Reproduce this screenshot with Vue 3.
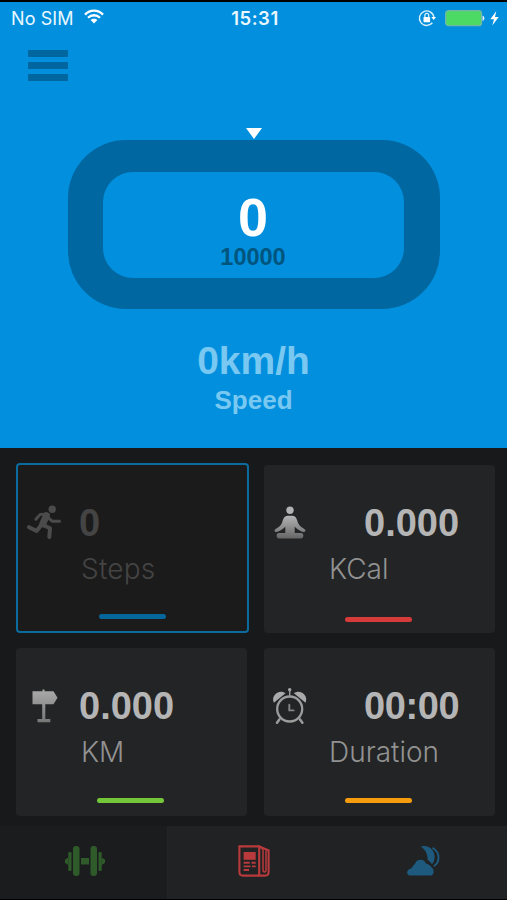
<script setup>
const cards = [
  { id: 'steps', value: '0', label: 'Steps', active: true },
  { id: 'kcal', value: '0.000', label: 'KCal' },
  { id: 'km', value: '0.000', label: 'KM' },
  { id: 'duration', value: '00:00', label: 'Duration' },
]
</script>

<template>
  <main class="screen">
    <section class="hero">
      <header class="status">
        <div class="carrier">
          <span>No SIM</span>
          <svg width="20" height="16" viewBox="0 0 20 16" fill="none" stroke="#fff" stroke-width="2.3">
            <path d="M1 5.6C6 .2 14 .2 19 5.6M4 8.8C7.4 5.4 12.6 5.4 16 8.8" />
            <path d="M6.6 11.1C8.5 9.2 11.5 9.2 13.4 11.1L10 14.6Z" fill="#fff" stroke="none" />
          </svg>
        </div>
        <time>15:31</time>
        <div class="power">
          <svg class="lock" width="19" height="18" viewBox="0 0 19 18" fill="none" stroke="#d9f0fb">
            <path d="M14.4 13.8A7.3 7.3 0 1 1 15.9 8" stroke-width="1.4" />
            <path d="M13.3 8H18L15.7 10.9Z" fill="#fff" stroke="none" />
            <rect x="5.5" y="8" width="6.6" height="5.2" rx=".6" fill="#fff" stroke="none" />
            <path d="M6.9 8.5V6.3a1.9 1.9 0 0 1 3.8 0v2.2" stroke-width="1.3" />
          </svg>
          <svg class="battery" width="40" height="17" viewBox="0 0 40 17">
            <rect x=".7" y=".7" width="35.8" height="15" rx="2.8" fill="#4cd964" stroke="#6fb9a6" stroke-width="1.3" />
            <path d="M37.5 5.5Q39.4 6 39.4 8.2T37.5 11Z" fill="#d9f0fb" />
          </svg>
          <svg class="bolt" width="9" height="15" viewBox="0 0 9 15"><path d="M6.3 0 .3 8.2H4L2.3 14.5 8.7 5.9H5Z" fill="#fff" /></svg>
        </div>
      </header>
      <button class="menu" aria-label="Menu"><i /><i /><i /></button>
      <svg class="marker" width="16" height="11" viewBox="0 0 16 11"><path d="M0 0H16L8 11Z" fill="#fff" /></svg>
      <div class="track">
        <div class="inner">
          <strong>0</strong>
          <span>10000</span>
        </div>
      </div>
      <div class="speed">0km/h</div>
      <div class="speed-label">Speed</div>
    </section>

    <section class="cards">
      <article v-for="card in cards" :key="card.id" class="card" :class="[card.id, { active: card.active }]">
        <div class="icon">
          <svg v-if="card.id === 'steps'" width="35" height="34" viewBox="0 0 35 34" fill="none" stroke="#4b4b4b" stroke-linecap="round" stroke-linejoin="round">
            <circle cx="25.2" cy="4.2" r="3.7" fill="#4b4b4b" stroke="none" />
            <path d="M20 9.2 13.2 9.4 8.9 14.3" stroke-width="2.9" />
            <path d="M19.5 10.5 15.7 19" stroke-width="6.8" />
            <path d="M20.5 12 25.4 16.3H32.5" stroke-width="3" />
            <path d="M14.3 20 9.6 26 2 22.2M16 20 23 23.3 22.3 32" stroke-width="4" />
          </svg>
          <svg v-else-if="card.id === 'kcal'" width="32" height="33" viewBox="0 0 32 33">
            <defs><linearGradient id="sitShade" x2="0" y2="1"><stop stop-color="#b4b4b4" /><stop offset="1" stop-color="#666" /></linearGradient></defs>
            <circle cx="16" cy="4.2" r="3.7" fill="#b2b2b2" />
            <path d="M13.7 9.8H18.3C22.4 10 23 14 24 17C25.3 20 28.3 21.8 30.7 23.2C32.3 24.3 31 26.6 29 26C25.8 25 22.6 22.7 20.7 20.8V27H27C30.2 27 30.2 32.4 27 32.4H5C1.8 32.4 1.8 27 5 27H11.3V20.8C9.4 22.7 6.2 25 3 26C1 26.6-.3 24.3 1.3 23.2C3.7 21.8 6.7 20 8 17C9 14 9.6 10 13.7 9.8Z" fill="url(#sitShade)" />
          </svg>
          <svg v-else-if="card.id === 'km'" width="27" height="34" viewBox="0 0 27 34">
            <defs><linearGradient id="signShade" x2="0" y2="1"><stop stop-color="#aaa" /><stop offset="1" stop-color="#777" /></linearGradient></defs>
            <path d="M.5 2.3H10.5V.5H12.5V2.3H21.5L25.5 8.7 21.5 15.3H13.3V30H18.3V33.2H5.5V30H10.2V15.3H.5Z" fill="url(#signShade)" />
          </svg>
          <svg v-else width="36" height="37" viewBox="0 0 36 37" fill="none" stroke="#9c9c9c" stroke-linecap="round">
            <circle cx="17.7" cy="22" r="12.5" stroke-width="2.3" />
            <path d="M7.4 32.4 5 35.7M28 32.4 30.4 35.7" stroke-width="2.5" />
            <path d="M1.9 15.7C-1.5 8.5 7.2 1.4 13.5 6.2ZM33.5 15.7C36.9 8.5 28.2 1.4 21.9 6.2Z" fill="#aaa" stroke="none" />
            <circle cx="17.7" cy="2.7" r="1.7" fill="#aaa" stroke="none" />
            <path d="M17.7 3V9" stroke-width="1.4" />
            <path d="M17.3 17.7V23.4H21.6" stroke-width="1.9" stroke="#858585" />
          </svg>
        </div>
        <div class="value">{{ card.value }}</div>
        <div class="label">{{ card.label }}</div>
        <div class="bar" />
      </article>
    </section>

    <nav class="tabs">
      <button class="tab selected" aria-label="Training">
        <svg width="40" height="32" viewBox="0 0 40 32" fill="#2e5b29">
          <rect x="8" y="1" width="6.5" height="30" rx="3" /><rect x="25.5" y="1" width="6.5" height="30" rx="3" />
          <rect x="3.3" y="7" width="3.2" height="19" rx="1.2" /><rect x="33.5" y="7" width="3.2" height="19" rx="1.2" />
          <path d="M3.2 12.5V20L0 17.7V14.8ZM36.8 12.5V20L40 17.7V14.8ZM16 13H24V19.5H16Z" />
        </svg>
      </button>
      <button class="tab" aria-label="News">
        <svg width="32" height="32" viewBox="0 0 32 32" fill="none" stroke="#b93a3c" stroke-width="2.1">
          <path d="M21.2 1.4H1.4V27Q1.4 30.6 5 30.6H27Q30.6 30.6 30.6 27V5.5L21.2 1.4V30.6" />
          <path d="M21.2 1.4 25 4.3V24.5Q25 27 26.5 27T28 24.5V5.2" stroke-width="1.5" />
          <path d="M5.6 7H17.7V14.8H5.6Z" fill="#b93a3c" stroke="none" />
          <path d="M5.6 17.7H11.7M13.5 17.7H17.7M5.6 21.4H12.5M14 21.4H17.7M5.6 25H11" stroke-width="1.9" />
        </svg>
      </button>
      <button class="tab" aria-label="Weather">
        <svg width="33" height="31" viewBox="0 0 33 31" fill="#1d5a7d">
          <path d="M3.5 30.5C-1.2 30.5-.8 24.5 4 23.6Q6.4 20.7 8.5 18C9.6 13.8 17.3 13.5 18.8 18.2Q23.5 20 24.9 22.8C27.8 24.5 27 30.5 23.8 30.5Z" />
          <path d="M13.5 1.5C21.5-1.2 29.5 5.8 27.3 14.8C26.8 17.1 25.8 18.4 24.9 19.1C23.5 16.8 22.2 15.8 20.7 14.9C20.5 9 18.5 4.4 13.5 1.5Z" />
          <path d="M25.5 2.7C34.2 8 32.4 18.3 26.8 21.2" fill="none" stroke="#1d5a7d" stroke-width="1.9" />
        </svg>
      </button>
    </nav>
  </main>
</template>

<style>
body { margin: 0; background: #000; }
</style>

<style scoped>
* { box-sizing: border-box; }
button { border: 0; padding: 0; background: none; }
svg { display: block; overflow: visible; }
.screen { display: flex; flex-direction: column; width: 507px; height: 900px; padding: 2px 0 1px; overflow: hidden; background: #18191b; font-family: "Liberation Sans", Arial, sans-serif; box-shadow: inset 0 2px #000, inset 0 -1px #000; }
.hero { display: flex; flex-direction: column; align-items: center; height: 446px; background: #028fdd; }
.status { display: grid; grid-template-columns: 1fr auto 1fr; align-items: center; width: 100%; height: 33px; padding: 0 8px 0 11px; color: #e9f8ff; font: 400 18px/33px Inter, sans-serif; }
.carrier { display: flex; align-items: center; gap: 10px; }
.carrier span { font-size: 18px; letter-spacing: .1px; }
.carrier svg { margin-top: -3px; }
time { font-weight: 600; font-size: 18.5px; letter-spacing: .5px; }
.power { display: flex; align-items: center; justify-content: flex-end; margin-top: -1px; }
.lock { margin-right: 8px; }
.bolt { margin-left: 5px; }
.menu { display: grid; gap: 5px; align-self: flex-start; margin: 15px 0 0 28px; }
.menu i { width: 40px; height: 7px; border-radius: 1px; background: #00669f; }
.marker { margin-top: 47px; }
.track { width: 372px; height: 169px; margin-top: 1px; padding: 32px 36px 31px 35px; border-radius: 58px; background: #0067a1; }
.inner { display: flex; flex-direction: column; align-items: center; width: 301px; height: 106px; border-radius: 30px; background: #028fdd; }
.inner strong { margin-top: 17px; color: #fff; font-size: 54px; line-height: 57px; }
.inner span { color: #00557f; font-size: 23.5px; font-weight: 700; line-height: 22px; }
.speed { margin-top: 31px; color: #79c8f1; font-size: 39px; line-height: 42px; font-weight: 700; }
.speed-label { margin-top: 3px; color: #79c8f1; font-size: 26px; line-height: 30px; font-weight: 700; }
.cards { display: grid; grid-template: 168px 168px / 231px 231px; gap: 15px 17px; height: 378px; padding: 17px 12px 0 16px; background: #18191a; }
.card { display: grid; grid-template: 81px 87px / 63px 1fr; position: relative; border-radius: 4px; background: #232425; }
.icon { grid-row: 1; grid-column: 1; padding: 41px 0 0 10px; }
.value { grid-row: 1; grid-column: 2; padding-top: 37px; color: #b5b5b5; font-size: 38px; line-height: 42px; font-weight: 700; }
.label { grid-row: 2; grid-column: 2; padding-left: 2px; padding-top: 5px; color: #929292; font: 300 28px/36px Inter, sans-serif; }
.bar { position: absolute; bottom: 11px; left: 81px; width: 67px; height: 5px; border-radius: 3px; background: #d63a39; }
.steps { width: 233px; height: 170px; margin-top: -2px; background: #1b1b1b; box-shadow: inset 0 0 0 2px #0b6a9e; }
.steps .icon { padding: 42px 0 0 11px; }
.steps .value { color: #444; padding-top: 39px; }
.steps .label { color: #444; padding-top: 7px; letter-spacing: .2px; }
.steps .bar { left: 83px; bottom: 14px; background: #05669c; }
.kcal .value, .duration .value { padding-left: 37px; }
.duration .value { letter-spacing: -.4px; }
.kcal .icon { padding-top: 41px; }
.km .icon { padding: 41px 0 0 16px; }
.duration .icon { padding: 39px 0 0 8px; }
.km .bar { bottom: 13px; background: #75c73a; }
.duration .bar { bottom: 13px; background: #f79c0d; }
.tabs { display: grid; grid-template-columns: 168px 1fr 1fr; flex: 1; background: #202224; }
.tab { display: flex; align-items: center; justify-content: center; padding: 0 0 4px 3px; }
.selected { background: #1b1c1e; border-right: 1px solid #232427; }
</style>
